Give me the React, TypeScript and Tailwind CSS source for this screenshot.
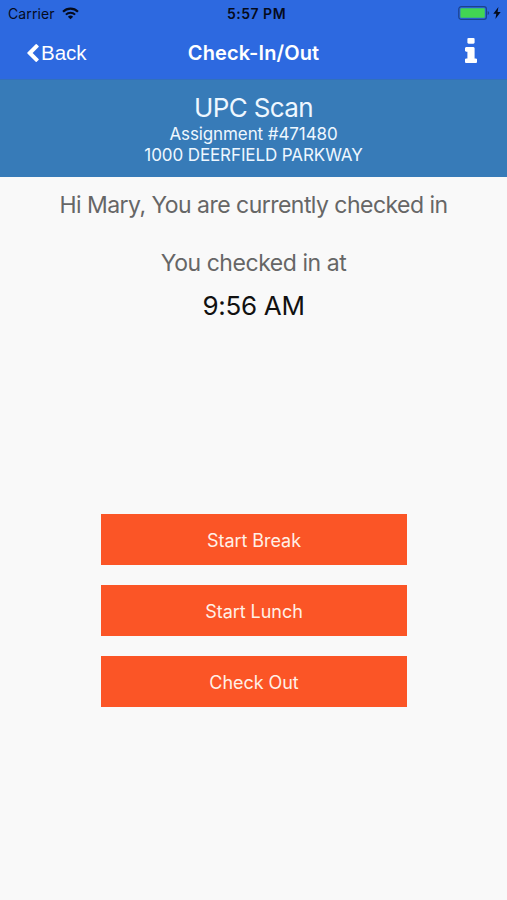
import type { ReactNode } from "react";

const actions = ["Start Break", "Start Lunch", "Check Out"];

function WifiIcon() {
  return (
    <svg viewBox="0 0 18 13" className="w-[17px] h-[13px]" fill="none" stroke="#050b1c">
      <path d="M1.1 4.6a11.3 11.3 0 0 1 15.8 0" strokeWidth="2.3" />
      <path d="M4.1 7.7a7 7 0 0 1 9.8 0" strokeWidth="2.1" />
      <path d="M9 12.7 6.2 9.9a4 4 0 0 1 5.6 0z" fill="#050b1c" stroke="none" />
    </svg>
  );
}

function BatteryIcon() {
  return (
    <svg viewBox="0 0 32 14" className="w-8 h-3.5">
      <rect x="0.8" y="0.7" width="27.6" height="12.6" rx="2.4" fill="none" stroke="#1c438c" strokeWidth="1.2" />
      <rect x="2.4" y="2.2" width="24.4" height="9.6" rx="0.8" fill="#42d553" />
      <path d="M29.6 5v4q1.6-.6 1.6-2t-1.6-2z" fill="#1c438c" />
    </svg>
  );
}

function BoltIcon() {
  return (
    <svg viewBox="0 0 8 12" className="w-2 h-3" fill="#050b1c">
      <path d="M5.4 0 .3 6.8h3L2.4 12l5.3-7.1H4.6z" />
    </svg>
  );
}

function ChevronLeft() {
  return (
    <svg viewBox="410 26 1036 1612" className="w-3 h-[18px]" fill="#fff">
      <path d="M1427 301l-531 531 531 531q19 19 19 45t-19 45l-166 166q-19 19-45 19t-45-19l-742-742q-19-19-19-45t19-45l742-742q19-19 45-19t45 19l166 166q19 19 19 45t-19 45z" />
    </svg>
  );
}

function InfoIcon() {
  return (
    <svg viewBox="0 128 640 1408" preserveAspectRatio="none" className="w-3 h-[25px]" fill="#fff">
      <path d="M640 1344v128q0 26-19 45t-45 19h-512q-26 0-45-19t-19-45v-128q0-26 19-45t45-19h64v-384h-64q-26 0-45-19t-19-45v-128q0-26 19-45t45-19h384q26 0 45 19t19 45v576h64q26 0 45 19t19 45zM512 192v192q0 26-19 45t-45 19h-256q-26 0-45-19t-19-45v-192q0-26 19-45t45-19h256q26 0 45 19t19 45z" />
    </svg>
  );
}

function ActionButton({ children }: { children: ReactNode }) {
  return (
    <button className="w-[306px] h-[51px] pt-[2px] pl-px bg-[#fb5526] text-[#fff0e6] text-[18px] tracking-[-0.05px]">
      {children}
    </button>
  );
}

export default function App() {
  return (
    <div className="w-full h-[900px] overflow-hidden bg-[#f9f9f9] font-['Inter',sans-serif]">
      <header className="h-[79px] bg-[#2d69e0]">
        <div className="h-[27px] grid grid-cols-[1fr_auto_1fr] items-center text-[14px] text-[#050b1c]">
          <div className="flex items-center gap-[7px] pl-2">
            <span className="tracking-[0.1px] pb-px">Carrier</span>
            <WifiIcon />
          </div>
          <span className="font-semibold pl-1.5 pb-px tracking-[0.5px]">5:57 PM</span>
          <div className="flex items-center justify-end gap-[3px] pr-1.5 pb-px">
            <BatteryIcon />
            <BoltIcon />
          </div>
        </div>
        <div className="h-[52px] grid grid-cols-[1fr_auto_1fr] items-center text-white">
          <button className="flex items-center gap-0.5 pl-[27px] font-['Liberation_Sans',sans-serif] text-[20.5px]">
            <ChevronLeft />
            <span>Back</span>
          </button>
          <h1 className="text-[20px] font-semibold tracking-[0.1px]">Check-In/Out</h1>
          <div className="flex justify-end pr-[30px] pb-[5px]">
            <InfoIcon />
          </div>
        </div>
      </header>

      <section className="h-[98px] pt-[13px] bg-[#377bb8] border-t border-[#3170bd] text-center text-[#eef7ff]">
        <h2 className="text-[26px] leading-[30px] tracking-[-0.65px]">UPC Scan</h2>
        <p className="pt-px text-[17px] leading-[21px] tracking-[-0.1px]">Assignment #471480</p>
        <p className="text-[17px] leading-[21px] tracking-[-0.1px]">1000 DEERFIELD PARKWAY</p>
      </section>

      <main className="flex flex-col items-center">
        <p className="mt-[13px] text-[23px] leading-[30px] tracking-[-0.53px] text-[#666]">
          Hi Mary, You are currently checked in
        </p>
        <p className="mt-7 text-[23px] leading-[30px] tracking-[-0.45px] text-[#666]">You checked in at</p>
        <p className="mt-3 text-[26px] leading-[32px] tracking-[-0.3px] text-[#111]">9:56 AM</p>
        <div className="mt-48 flex flex-col gap-5">
          {actions.map((label) => (
            <ActionButton key={label}>{label}</ActionButton>
          ))}
        </div>
      </main>
    </div>
  );
}
